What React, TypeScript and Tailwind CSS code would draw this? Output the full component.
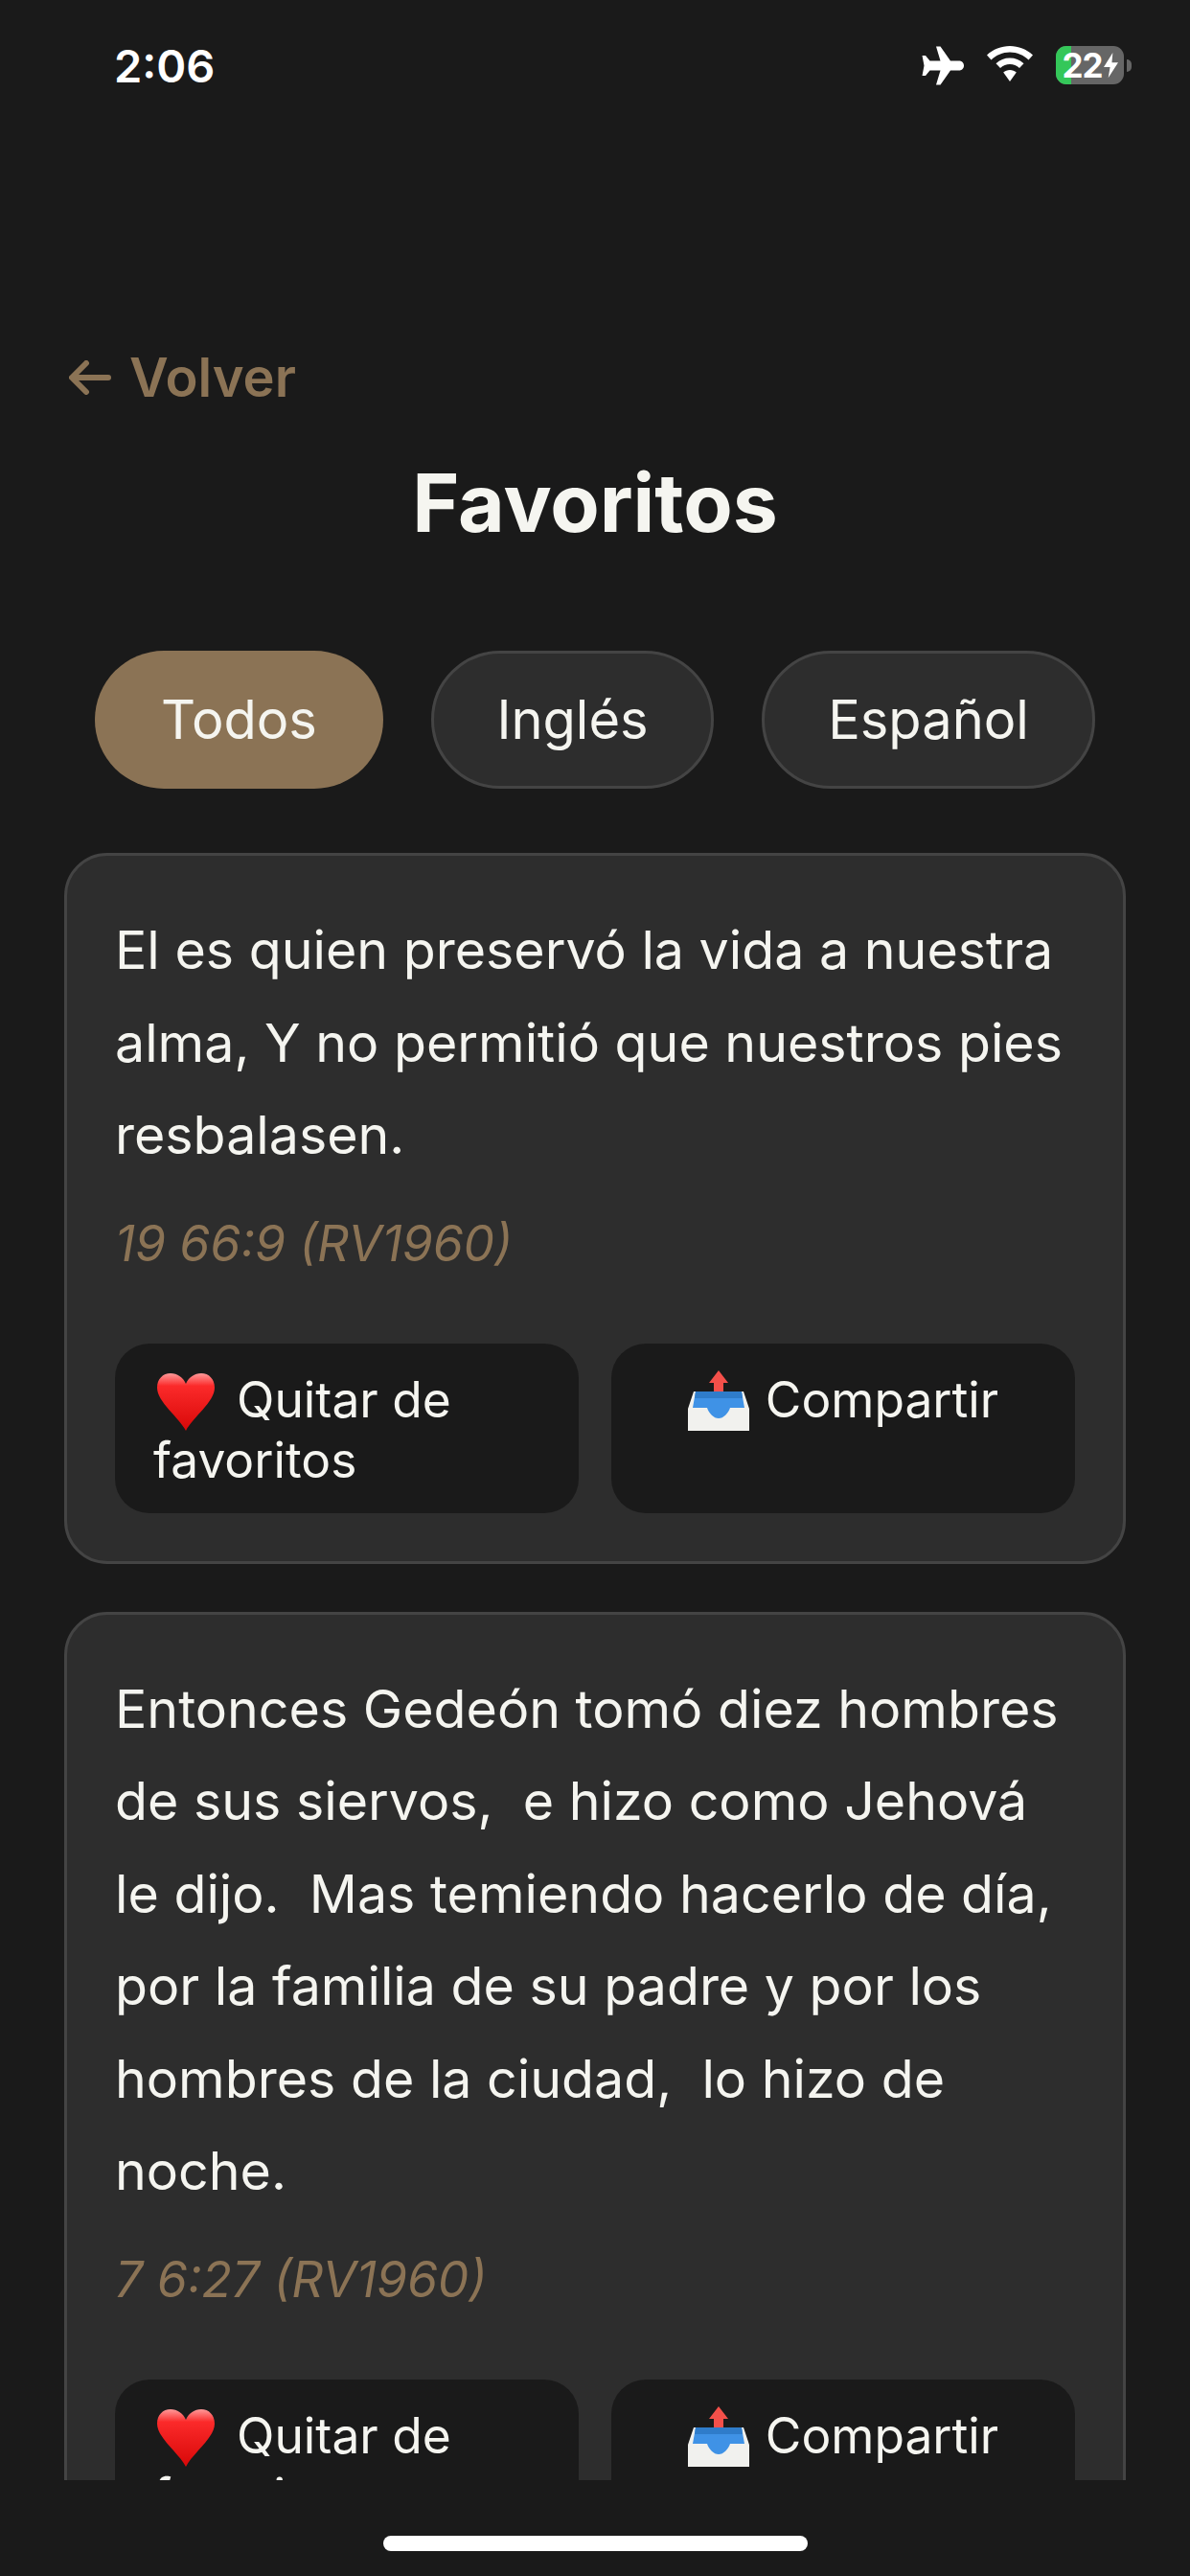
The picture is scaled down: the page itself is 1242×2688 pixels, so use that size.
import React from 'react'

const font = { fontFamily: 'Inter, "Noto Sans", sans-serif' }

function Plane() {
  return (
    <svg width="45" height="41" viewBox="0 0 45 41" fill="white">
      <path d="M16 0.5 L20.5 0.5 L31 15.5 L40 15.5 C43 15.5 45 17.8 45 20.5 C45 23.2 43 25.5 40 25.5 L31 25.5 L20.5 40.5 L16 40.5 L20.5 25.5 L9.5 25.5 L5 31 L1.5 31 L3.5 20.5 L1.5 10 L5 10 L9.5 15.5 L20.5 15.5 Z" />
    </svg>
  )
}

function Wifi() {
  return (
    <svg width="48" height="37" viewBox="0 0 48 37" fill="white">
      <path d="M24 0 C33 0 41.5 3.5 48 9.5 L43.5 14.5 C38.5 9.5 31.5 6.5 24 6.5 C16.5 6.5 9.5 9.5 4.5 14.5 L0 9.5 C6.5 3.5 15 0 24 0 Z" />
      <path d="M24 12.5 C29.5 12.5 34.5 14.5 38.5 18.2 L34 23 C31.2 20.5 27.7 19 24 19 C20.3 19 16.8 20.5 14 23 L9.5 18.2 C13.5 14.5 18.5 12.5 24 12.5 Z" />
      <path d="M24 25 C26.5 25 29 26 30.8 27.6 L24 37 L17.2 27.6 C19 26 21.5 25 24 25 Z" />
    </svg>
  )
}

function Battery() {
  return (
    <div className="flex items-center">
      <div className="relative flex h-[40px] w-[71px] items-center justify-center overflow-hidden rounded-[11px] bg-[#666666]">
        <div className="absolute left-0 top-0 h-full w-[16px] bg-[#34c759]" />
        <span className="relative text-[35px] font-bold leading-none tracking-[-1px] text-white">22</span>
        <svg className="relative ml-[1px] shrink-0" width="15" height="28" viewBox="0 0 16 28" fill="white">
          <path d="M10 0 L0 16 L7 16 L5 28 L16 11 L9 11 Z" />
        </svg>
      </div>
      <div className="ml-[3px] h-[13px] w-[5px] rounded-r-full bg-[#666666]" />
    </div>
  )
}

function Heart() {
  return (
    <svg className="mr-[22px] ml-[3px] inline-block align-[-14px]" width="62" height="60" viewBox="0 0 62 60">
      <defs>
        <linearGradient id="heartFill" x1="0" y1="0" x2="0" y2="1">
          <stop offset="0" stopColor="#ff9a9a" />
          <stop offset="0.22" stopColor="#fb2a2a" />
          <stop offset="1" stopColor="#d80808" />
        </linearGradient>
      </defs>
      <path
        d="M31 60 C24 46 1 30 1 15 C1 6 7 0 15 0 C22 0 28 4 31 11 C34 4 40 0 47 0 C55 0 61 6 61 15 C61 30 38 46 31 60 Z"
        fill="url(#heartFill)"
      />
    </svg>
  )
}

function Outbox() {
  return (
    <svg className="mr-[17px] inline-block align-[-14px]" width="64" height="63" viewBox="0 0 64 63">
      <path d="M6 22 L58 22 L64 40 L64 63 L0 63 L0 40 Z" fill="#f1f1ee" />
      <path d="M8 22 L56 22 L59 39 L44 39 C42 45 37 50 32 50 C27 50 22 45 20 39 L5 39 Z" fill="#3f92e6" />
      <path d="M8 22 L56 22 L57 29 L7 29 Z" fill="#2f7cca" />
      <path d="M32 0 L42 13 L37 13 L37 22 L27 22 L27 13 L22 13 Z" fill="#f4504a" />
    </svg>
  )
}

function ActionButtons() {
  return (
    <div className="flex gap-[34px]">
      <button className="flex h-[177px] flex-1 justify-center rounded-[36px] bg-[#1a1a1a] px-[40px] pt-[28px] text-left text-[51.5px] font-[375] leading-[61px] text-[#f5f5f0]">
        <span className="w-full">
          <Heart />
          Quitar de favoritos
        </span>
      </button>
      <button className="flex h-[177px] flex-1 justify-center rounded-[36px] bg-[#1a1a1a] px-[40px] pt-[28px] text-center text-[51.5px] font-[375] leading-[61px] text-[#f5f5f0]">
        <span>
          <Outbox />
          Compartir
        </span>
      </button>
    </div>
  )
}

function VerseCard({ lines, cite }: { lines: string[]; cite: string }) {
  return (
    <div className="mb-[50px] rounded-[45px] border-[3px] border-[#444444] bg-[#2d2d2d] p-[50px]">
      <p className="whitespace-pre text-[55.5px] font-[375] leading-[96.5px] text-[#f5f5f0]">{lines.join('\n')}</p>
      <p className="mb-[76px] mt-[35px] text-[51.5px] font-[375] italic leading-[58px] text-[#8b7355]">{cite}</p>
      <ActionButtons />
    </div>
  )
}

export default function App() {
  return (
    <main style={font} className="flex h-[2688px] w-[1242px] flex-col overflow-hidden bg-[#1a1a1a]">
      <div className="flex h-[135px] shrink-0 items-start justify-between pl-[119px] pr-[61px] pt-[40px]">
        <span className="text-[47px] font-semibold leading-[58px] text-white">2:06</span>
        <div className="mt-[8px] flex items-start gap-[24px]">
          <Plane />
          <Wifi />
          <Battery />
        </div>
      </div>

      <div className="flex-1 overflow-hidden px-[67px]">
        <div className="mt-[225px] flex h-[68px] items-center gap-[19px] pl-[5px] text-[56px] font-semibold text-[#8b7355]">
          <svg width="44" height="36" viewBox="0 0 44 36" fill="none" stroke="#8b7355" strokeWidth="6" strokeLinecap="round" strokeLinejoin="round">
            <path d="M41 18 L4 18 M18 3 L3 18 L18 33" />
          </svg>
          <span>Volver</span>
        </div>
        <h1 className="mt-[46px] text-center text-[84px] font-bold leading-[102px] text-[#f5f5f0]">Favoritos</h1>

        <div className="mt-[103px] flex justify-center gap-[50px]">
          <button className="h-[144px] w-[301px] rounded-full bg-[#8b7355] text-[56px] font-[375] text-[#f5f5f0]">Todos</button>
          <button className="h-[144px] w-[295px] rounded-full border-[3px] border-[#444444] bg-[#2d2d2d] text-[56px] font-[375] text-[#f5f5f0]">Inglés</button>
          <button className="h-[144px] w-[348px] rounded-full border-[3px] border-[#444444] bg-[#2d2d2d] text-[56px] font-[375] text-[#f5f5f0]">Español</button>
        </div>

        <div className="mt-[67px]">
          <VerseCard
            lines={['El es quien preservó la vida a nuestra', 'alma, Y no permitió que nuestros pies', 'resbalasen.']}
            cite="19 66:9 (RV1960)"
          />
          <VerseCard
            lines={[
              'Entonces Gedeón tomó diez hombres',
              'de sus siervos,  e hizo como Jehová',
              'le dijo.  Mas temiendo hacerlo de día,',
              'por la familia de su padre y por los',
              'hombres de la ciudad,  lo hizo de',
              'noche.',
            ]}
            cite="7 6:27 (RV1960)"
          />
        </div>
      </div>

      <div className="flex h-[100px] shrink-0 justify-center pt-[58px]">
        <div className="h-[16px] w-[443px] rounded-full bg-white" />
      </div>
    </main>
  )
}
